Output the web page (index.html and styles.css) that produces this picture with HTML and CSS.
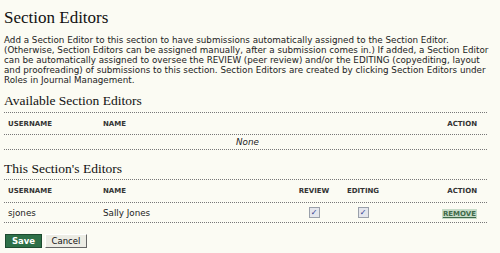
FILE: index.html
```html
<!DOCTYPE html>
<html>
    <head>
        <link rel="stylesheet" href="styles.css">
    </head>
    <body>
        <div class="page">
            <h2 class="title">Section Editors</h2>
            <p class="intro">Add a Section Editor to this section to have submissions automatically assigned to the Section Editor. (Otherwise, Section Editors can be assigned manually, after a submission comes in.) If added, a Section Editor can be automatically assigned to oversee the REVIEW (peer review) and/or the EDITING (copyediting, layout and proofreading) of submissions to this section. Section Editors are created by clicking Section Editors under Roles in Journal Management.</p>

            <h3 class="subtitle">Available Section Editors</h3>
            <div class="listing">
                <div class="row heading">
                    <div class="cell">Username</div>
                    <div class="cell">Name</div>
                    <div class="cell"></div>
                    <div class="cell"></div>
                    <div class="cell action">Action</div>
                </div>
                <div class="row empty">
                    <div class="cell none">None</div>
                </div>
            </div>

            <h3 class="subtitle second">This Section's Editors</h3>
            <div class="listing">
                <div class="row heading tall">
                    <div class="cell">Username</div>
                    <div class="cell">Name</div>
                    <div class="cell center">Review</div>
                    <div class="cell center">Editing</div>
                    <div class="cell action">Action</div>
                </div>
                <div class="row item">
                    <div class="cell">sjones</div>
                    <div class="cell">Sally Jones</div>
                    <div class="cell center"><span class="check">&#10003;</span></div>
                    <div class="cell center"><span class="check">&#10003;</span></div>
                    <div class="cell action"><a class="remove" href="#">Remove</a></div>
                </div>
            </div>

            <div class="buttons">
                <button class="save">Save</button>
                <button class="cancel">Cancel</button>
            </div>
        </div>
    </body>
</html>
```
FILE: styles.css
```css
html,
body {
    margin: 0;
    background-color: #fbfbf3;
}
.page {
    padding: 0 13px 0 4px;
    font-family: "DejaVu Sans", Verdana, sans-serif;
    font-size: 8.75px;
    color: #222;
}
.title {
    margin: 0;
    padding-top: 8px;
    height: 35px;
    font-family: "Liberation Serif", Georgia, serif;
    font-size: 17px;
    font-weight: normal;
    color: #111;
    box-sizing: border-box;
}
.intro {
    margin: 0 -9px 0 0;
    line-height: 10px;
}
.subtitle {
    margin: 0;
    padding-top: 8px;
    height: 28px;
    box-sizing: border-box;
    font-family: "Liberation Serif", Georgia, serif;
    font-size: 13.5px;
    font-weight: normal;
    color: #111;
    border-bottom: 1px dotted #777;
}
.subtitle.second {
    padding-top: 11px;
    height: 30px;
}
.listing .row {
    display: grid;
    grid-template-columns: 95px 191px 48px 50px 1fr;
    align-items: center;
    border-bottom: 1px dotted #777;
}
.listing .cell {
    padding-left: 4px;
}
.listing .center {
    text-align: center;
    padding-left: 0;
}
.listing .action {
    text-align: right;
    padding-right: 10px;
}
.listing .heading {
    height: 21px;
    font-size: 7px;
    font-weight: bold;
    text-transform: uppercase;
    color: #333;
}
.listing .heading.tall {
    height: 22px;
}
.listing .empty {
    display: block;
    height: 14px;
}
.listing .none {
    padding-top: 2px;
    text-align: center;
    font-style: italic;
}
.listing .item {
    height: 19px;
}
.check {
    display: inline-block;
    width: 9px;
    height: 9px;
    border: 1px solid #9aa0aa;
    background-color: #e4e6ec;
    color: #2a3a8c;
    font-size: 8px;
    line-height: 9px;
    text-align: center;
    vertical-align: middle;
}
.remove {
    background-color: #c7dcc8;
    color: #3f6a4a;
    font-size: 7px;
    font-weight: bold;
    text-transform: uppercase;
    text-decoration: underline;
    padding: 1px 1px;
}
.buttons {
    padding-top: 11px;
    display: flex;
    gap: 3px;
    padding-left: 1px;
}
.buttons button {
    font-family: "DejaVu Sans", Verdana, sans-serif;
    font-size: 8.5px;
    height: 14px;
    padding: 0;
    cursor: pointer;
}
.save {
    background-color: #2e7048;
    color: #fff;
    font-weight: bold;
    border: 1px solid #1d4a2f;
    width: 37px;
}
.cancel {
    background-color: #ecece4;
    color: #111;
    border: 1px solid;
    border-color: #fff #666 #666 #fff;
    width: 42px;
}
```
